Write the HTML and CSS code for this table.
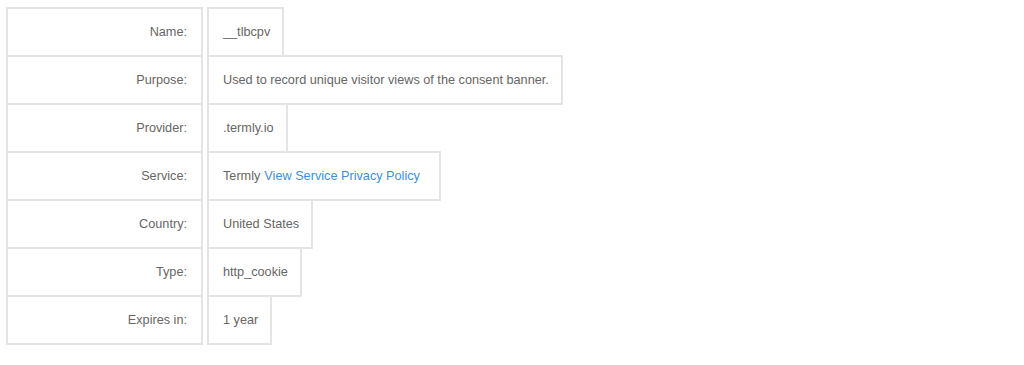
FILE: index.html
```html
<!DOCTYPE html>
<html>
<head>
<meta charset="utf-8">
<link rel="stylesheet" href="styles.css">
</head>
<body>
<div class="details">
  <div class="row"><div class="label">Name:</div><div class="value">__tlbcpv</div></div>
  <div class="row"><div class="label">Purpose:</div><div class="value">Used to record unique visitor views of the consent banner.</div></div>
  <div class="row"><div class="label">Provider:</div><div class="value">.termly.io</div></div>
  <div class="row"><div class="label">Service:</div><div class="value">Termly <a class="link" href="#">View Service Privacy Policy</a></div></div>
  <div class="row"><div class="label">Country:</div><div class="value">United States</div></div>
  <div class="row"><div class="label">Type:</div><div class="value">http_cookie</div></div>
  <div class="row"><div class="label">Expires in:</div><div class="value">1 year</div></div>
</div>
</body>
</html>
```

FILE: styles.css
```css
html, body {
  margin: 0;
  background: #fff;
}
body {
  padding: 7px 6px;
  font-family: "Liberation Sans", Arial, sans-serif;
  font-size: 12.7px;
  color: #666;
}
.details {
  display: flex;
  flex-direction: column;
  align-items: flex-start;
}
.row {
  display: flex;
  gap: 4px;
  height: 50px;
}
.row + .row {
  margin-top: -2px;
}
.label, .value {
  box-sizing: border-box;
  border: 2px solid #e4e4e4;
  display: flex;
  align-items: center;
  height: 50px;
}
.label {
  width: 197px;
  justify-content: flex-end;
  padding-right: 14px;
}
.value {
  padding: 0 12px 0 14px;
  white-space: nowrap;
}
.link {
  color: #3d8fe0;
  text-decoration: none;
  margin-left: 4px;
  margin-right: 7px;
}
```
